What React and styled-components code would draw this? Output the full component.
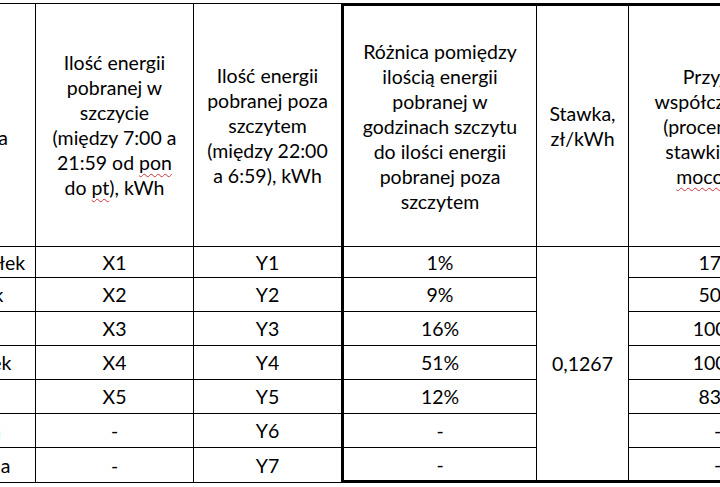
import React from 'react'
import styled, { createGlobalStyle } from 'styled-components'

const GlobalStyle = createGlobalStyle`
  html, body {
    margin: 0;
    padding: 0;
    background: #fff;
    overflow: hidden;
  }
`

const Sheet = styled.table`
  border-collapse: separate;
  border-spacing: 0;
  table-layout: fixed;
  width: 900px;
  margin: 3px 0 0 -93px;
  font-family: Lato, 'Liberation Sans', sans-serif;
  font-size: 19.5px;
  line-height: 25px;
  color: #000;
`

const Col = styled.col`
  width: ${(props) => props.$w}px;
`

const Row = styled.tr`
  height: ${(props) => props.$h}px;
`

const Cell = styled.td`
  box-sizing: border-box;
  padding: 0 4px;
  text-align: center;
  vertical-align: middle;
  white-space: nowrap;
  border-right: ${(props) => (props.$thickRight ? '3px' : '1px')} solid #000;
  border-bottom: ${(props) => (props.$thickBottom ? '3px' : '1px')} solid #000;
  border-top: ${(props) => (props.$top ? (props.$thickTop ? '3px' : '1px') : '0')} solid #000;
`

const Squiggle = styled.span`
  text-decoration-line: underline;
  text-decoration-style: wavy;
  text-decoration-color: #d0303a;
  text-decoration-thickness: 1px;
  text-underline-offset: 3px;
`

const COLS = [129, 158, 150, 193, 92, 178]

const ROWS = [
  ['Poniedziałek', 'X1', 'Y1', '1%', '17%'],
  ['Wtorek', 'X2', 'Y2', '9%', '50%'],
  ['Środa', 'X3', 'Y3', '16%', '100%'],
  ['Czwartek', 'X4', 'Y4', '51%', '100%'],
  ['Piątek', 'X5', 'Y5', '12%', '83%'],
  ['Sobota', '-', 'Y6', '-', '-'],
  ['Niedziela', '-', 'Y7', '-', '-'],
]

const ROW_HEIGHTS = [31, 34, 34, 34, 34, 34, 35]

const App = () => {
  return (<>
    <GlobalStyle />
    <Sheet>
      <colgroup>
        {COLS.map((w, i) => <Col key={i} $w={w} />)}
      </colgroup>
      <tbody>
        <Row $h={244}>
          <Cell $top>Dzień<br />tygodnia</Cell>
          <Cell $top>
            Ilość energii<br />pobranej w<br />szczycie<br />(między 7:00 a<br />
            21:59 od <Squiggle>pon</Squiggle><br />do <Squiggle>pt</Squiggle>), kWh
          </Cell>
          <Cell $top $thickRight>
            Ilość energii<br />pobranej poza<br />szczytem<br />(między 22:00<br />a 6:59), kWh
          </Cell>
          <Cell $top $thickTop>
            Różnica pomiędzy<br />ilością energii<br />pobranej w<br />godzinach szczytu<br />
            do ilości energii<br />pobranej poza<br />szczytem
          </Cell>
          <Cell $top $thickTop>Stawka,<br />zł/kWh</Cell>
          <Cell $top $thickTop>
            Przyjęty<br />współczynnika<br />(procentu od<br />stawki opłat<br />
            <Squiggle>mocowej</Squiggle>)
          </Cell>
        </Row>
        {ROWS.map(([day, peak, offPeak, diff, ratio], i) => {
          const last = i === ROWS.length - 1
          return (
            <Row key={day} $h={ROW_HEIGHTS[i]}>
              <Cell>{day}</Cell>
              <Cell>{peak}</Cell>
              <Cell $thickRight>{offPeak}</Cell>
              <Cell $thickBottom={last}>{diff}</Cell>
              {i === 0 && <Cell rowSpan={ROWS.length} $thickBottom>0,1267</Cell>}
              <Cell $thickBottom={last}>{ratio}</Cell>
            </Row>
          )
        })}
      </tbody>
    </Sheet>
  </>)
}

export default App
